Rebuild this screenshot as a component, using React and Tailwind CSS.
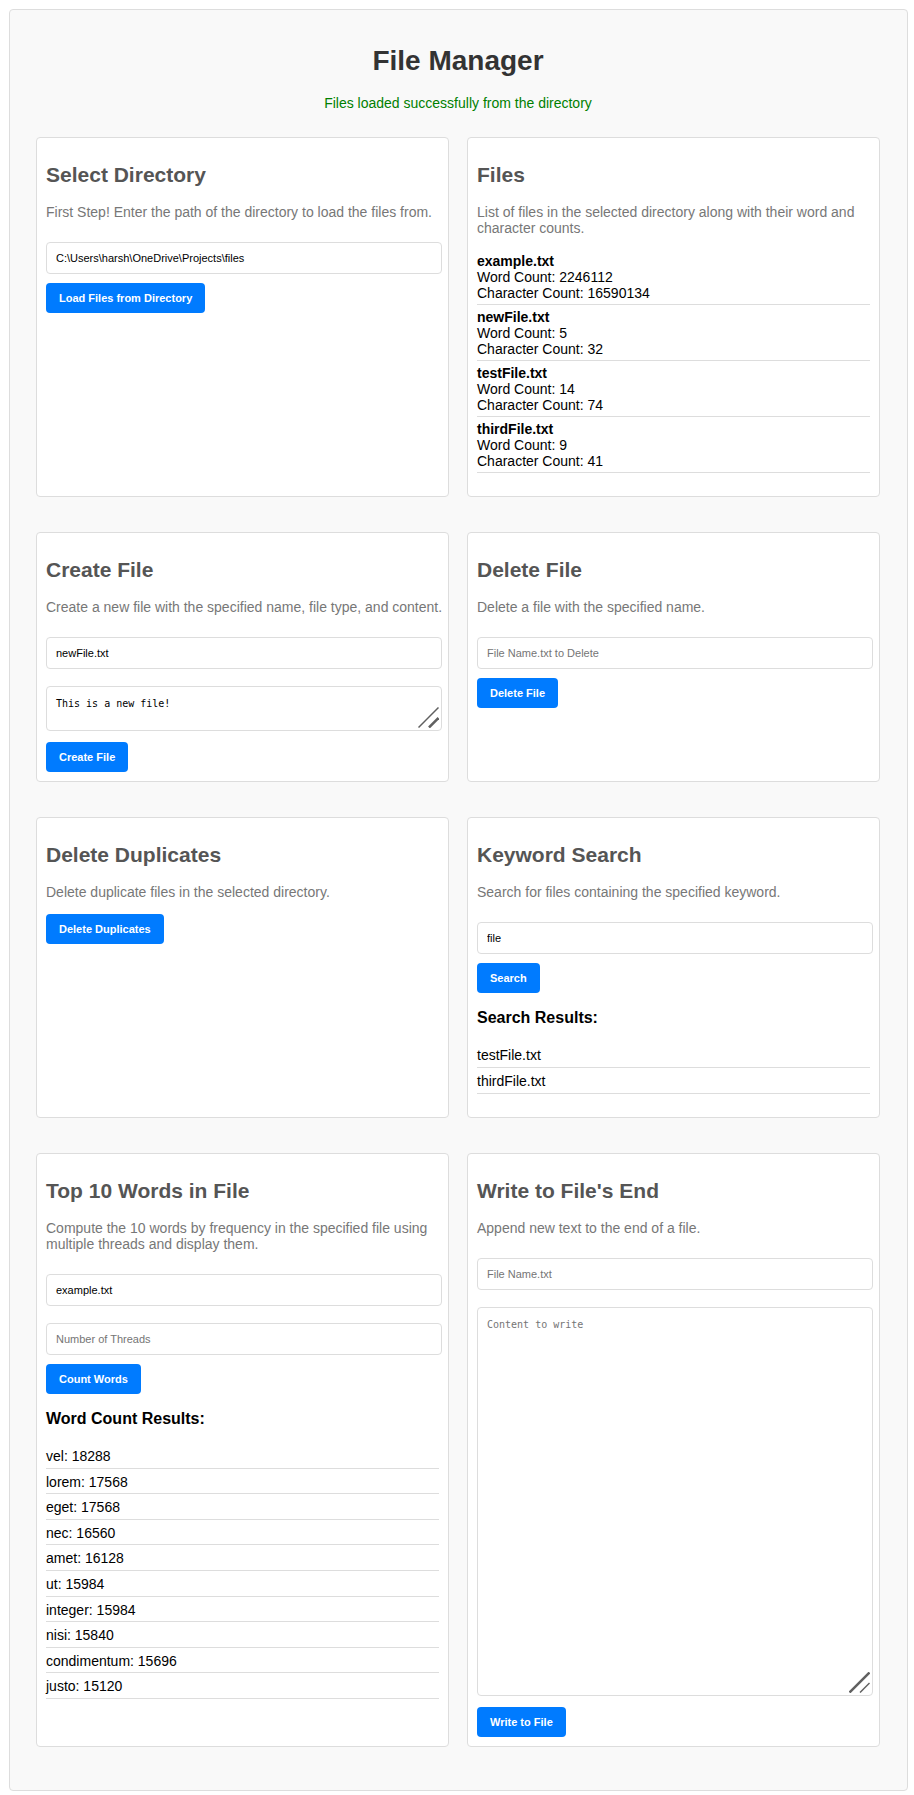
import { useState } from "react";

const FIELD =
  "block rounded-[4px] border border-[#dddddd] bg-white px-[9px] text-black outline-none placeholder:text-[#757575]";

const files = [
  { name: "example.txt", words: 2246112, characters: 16590134 },
  { name: "newFile.txt", words: 5, characters: 32 },
  { name: "testFile.txt", words: 14, characters: 74 },
  { name: "thirdFile.txt", words: 9, characters: 41 },
];

const searchResults = ["testFile.txt", "thirdFile.txt"];

const wordCounts = [
  ["vel", 18288],
  ["lorem", 17568],
  ["eget", 17568],
  ["nec", 16560],
  ["amet", 16128],
  ["ut", 15984],
  ["integer", 15984],
  ["nisi", 15840],
  ["condimentum", 15696],
  ["justo", 15120],
];

function Card({ title, description, children }) {
  return (
    <section className="min-w-0 rounded-[4px] border border-[#dddddd] bg-white p-[9px]">
      <h2 className="mt-4 text-[21px] leading-6 font-bold text-[#555555]">{title}</h2>
      <p className="mt-[17px] -mr-[6px] text-[#777777]">{description}</p>
      {children}
    </section>
  );
}

function Fields({ children }) {
  return <div className="mt-[22px] -mr-[3px] flex flex-col gap-[17px]">{children}</div>;
}

function TextField({ label, initial = "", placeholder }) {
  const [value, setValue] = useState(initial);
  return (
    <input
      type="text"
      aria-label={label}
      value={value}
      placeholder={placeholder}
      onChange={(e) => setValue(e.target.value)}
      className={`${FIELD} h-8 w-full text-[11px]`}
    />
  );
}

function TextArea({ label, initial = "", placeholder, height, long, short }) {
  const [value, setValue] = useState(initial);
  return (
    <div className="relative">
      <textarea
        aria-label={label}
        value={value}
        placeholder={placeholder}
        onChange={(e) => setValue(e.target.value)}
        className={`${FIELD} ${height} w-full resize-none overflow-hidden py-[9px] font-['DejaVu_Sans_Mono',monospace] text-[10px] leading-4`}
      />
      <svg
        aria-hidden="true"
        viewBox="0 0 21 21"
        className="pointer-events-none absolute right-[3px] bottom-[3px] size-[21px] stroke-[#606060]"
      >
        <path d="M0.5 20.5L20.5 0.5" strokeWidth={long} />
        <path d="M11 20.5L20.5 11" strokeWidth={short} />
      </svg>
    </div>
  );
}

function Button({ children, spacing }) {
  return (
    <button
      type="button"
      className={`${spacing} block h-[30px] cursor-pointer rounded-[4px] bg-[#007bff] px-[13px] text-[11px] font-bold text-white`}
    >
      {children}
    </button>
  );
}

function ResultsHeading({ children }) {
  return <h3 className="mt-[15px] text-[16px] leading-[19px] font-bold">{children}</h3>;
}

export default function App() {
  return (
    <main className="mt-[9px] mr-[6px] mb-1 ml-[9px] rounded-[4px] border border-[#dddddd] bg-[#f9f9f9] pt-[35px] pr-[27px] pb-[43px] pl-[26px] font-['Liberation_Sans',Arial,sans-serif] text-[14px] leading-4 text-black">
      <h1 className="text-center text-[28px] leading-8 font-bold text-[#333333]">File Manager</h1>
      <p className="mt-[18px] text-center text-[#008000]">
        Files loaded successfully from the directory
      </p>

      <div className="mt-[26px] grid grid-cols-2 gap-x-[18px] gap-y-[35px]">
        <Card
          title="Select Directory"
          description="First Step! Enter the path of the directory to load the files from."
        >
          <Fields>
            <TextField label="Directory path" initial="C:\Users\harsh\OneDrive\Projects\files" />
          </Fields>
          <Button spacing="mt-[9px]">Load Files from Directory</Button>
        </Card>

        <Card
          title="Files"
          description="List of files in the selected directory along with their word and character counts."
        >
          <ul className="mt-[13px] mb-[14px]">
            {files.map((file) => (
              <li key={file.name} className="border-b border-[#dddddd] pt-1 pb-[3px]">
                <strong className="block font-bold">{file.name}</strong>
                <span className="block">Word Count: {file.words}</span>
                <span className="block">Character Count: {file.characters}</span>
              </li>
            ))}
          </ul>
        </Card>

        <Card
          title="Create File"
          description="Create a new file with the specified name, file type, and content."
        >
          <Fields>
            <TextField label="New file name" initial="newFile.txt" />
            <TextArea
              label="New file content"
              initial="This is a new file!"
              height="h-[45px]"
              long={1.5}
              short={2.5}
            />
          </Fields>
          <Button spacing="mt-[11px]">Create File</Button>
        </Card>

        <Card title="Delete File" description="Delete a file with the specified name.">
          <Fields>
            <TextField label="File to delete" placeholder="File Name.txt to Delete" />
          </Fields>
          <Button spacing="mt-[9px]">Delete File</Button>
        </Card>

        <Card
          title="Delete Duplicates"
          description="Delete duplicate files in the selected directory."
        >
          <Button spacing="mt-[14px]">Delete Duplicates</Button>
        </Card>

        <Card
          title="Keyword Search"
          description="Search for files containing the specified keyword."
        >
          <Fields>
            <TextField label="Keyword" initial="file" />
          </Fields>
          <Button spacing="mt-[9px]">Search</Button>
          <ResultsHeading>Search Results:</ResultsHeading>
          <ul className="mt-[15px] mb-[14px] grid h-[52px] auto-rows-fr">
            {searchResults.map((name) => (
              <li key={name} className="border-b border-[#dddddd] pt-[5px]">
                {name}
              </li>
            ))}
          </ul>
        </Card>

        <Card
          title="Top 10 Words in File"
          description="Compute the 10 words by frequency in the specified file using multiple threads and display them."
        >
          <Fields>
            <TextField label="File to count" initial="example.txt" />
            <TextField label="Number of threads" placeholder="Number of Threads" />
          </Fields>
          <Button spacing="mt-[9px]">Count Words</Button>
          <ResultsHeading>Word Count Results:</ResultsHeading>
          <ul className="mt-[15px] mb-[14px] grid h-[256px] auto-rows-fr">
            {wordCounts.map(([word, count]) => (
              <li key={word} className="border-b border-[#dddddd] pt-[5px]">
                {word}: {count}
              </li>
            ))}
          </ul>
        </Card>

        <Card title="Write to File's End" description="Append new text to the end of a file.">
          <Fields>
            <TextField label="File to append to" placeholder="File Name.txt" />
            <TextArea
              label="Content to append"
              placeholder="Content to write"
              height="h-[389px]"
              long={2.5}
              short={1.5}
            />
          </Fields>
          <Button spacing="mt-[11px]">Write to File</Button>
        </Card>
      </div>
    </main>
  );
}
